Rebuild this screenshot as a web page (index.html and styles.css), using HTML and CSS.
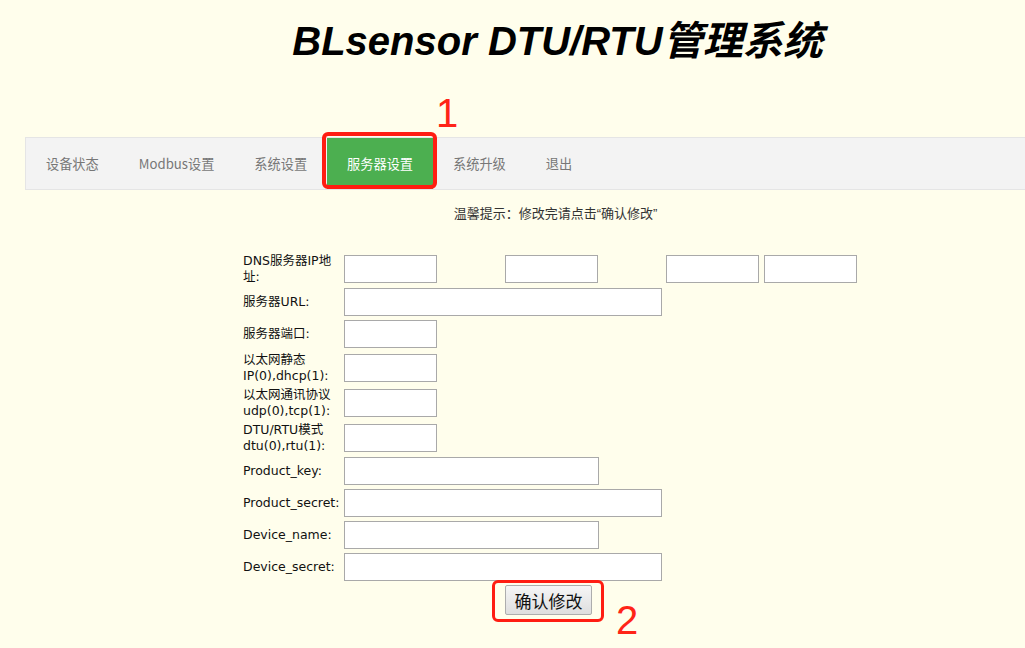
FILE: index.html
```html
<!DOCTYPE html>
<html lang="zh-CN">
<head>
  <meta charset="UTF-8" />
  <meta name="viewport" content="width=device-width, initial-scale=1.0">
  <title>BLsensor DTU/RTU管理系统</title>
  <link rel="stylesheet" href="styles.css">
</head>
<body>
  <h1 class="title">BLsensor DTU/RTU管理系统</h1>

  <ul class="menu">
    <li><a href="#">设备状态</a></li>
    <li><a href="#">Modbus设置</a></li>
    <li><a href="#">系统设置</a></li>
    <li class="active"><a href="#">服务器设置</a><span class="mark mark-1">1</span></li>
    <li><a href="#">系统升级</a></li>
    <li><a href="#">退出</a></li>
  </ul>

  <p class="tip">温馨提示：修改完请点击“确认修改”</p>

  <form class="settings" onsubmit="return false">
    <label>DNS服务器IP地址:</label>
    <div class="dns">
      <input type="text" class="short">
      <input type="text" class="short">
      <input type="text" class="short">
      <input type="text" class="short">
    </div>

    <label>服务器URL:</label>
    <input type="text" class="long">

    <label>服务器端口:</label>
    <input type="text" class="short">

    <label>以太网静态<br>IP(0),dhcp(1):</label>
    <input type="text" class="short">

    <label>以太网通讯协议<br>udp(0),tcp(1):</label>
    <input type="text" class="short">

    <label>DTU/RTU模式<br>dtu(0),rtu(1):</label>
    <input type="text" class="short">

    <label>Product_key:</label>
    <input type="text" class="mid">

    <label>Product_secret:</label>
    <input type="text" class="long">

    <label>Device_name:</label>
    <input type="text" class="mid">

    <label>Device_secret:</label>
    <input type="text" class="long">

    <div class="actions">
      <span class="annot">
        <button type="submit">确认修改</button>
        <span class="mark mark-2">2</span>
      </span>
    </div>
  </form>
</body>
</html>
```

FILE: styles.css
```css
body {
  margin: 0;
  padding-bottom: 34px;
  background: #fffeec;
  color: #111;
  font-family: "DejaVu Sans", "Noto Sans CJK SC", sans-serif;
}
.title {
  margin: 17px 0 0;
  padding-left: 90px;
  text-align: center;
  font-family: "Liberation Sans", "Noto Sans CJK SC", sans-serif;
  font-size: 40px;
  line-height: 48px;
  font-weight: bold;
  font-style: italic;
  color: #000;
}
.menu {
  list-style: none;
  display: flex;
  margin: 72px 0 0 25px;
  padding: 0;
  height: 51px;
  background: #f3f3f3;
  border: 1px solid #e5e5e5;
  border-right: none;
}
.menu li {
  position: relative;
  display: flex;
}
.menu a {
  display: flex;
  align-items: center;
  padding: 0 20px;
  color: #777;
  text-decoration: none;
  font-family: "Noto Sans CJK SC", sans-serif;
  font-size: 13.2px;
}
.menu .active a {
  background: #4caf50;
  color: #fff;
}
.menu .active::after {
  content: "";
  position: absolute;
  left: -5px;
  right: -4px;
  top: -6px;
  bottom: 0;
  border: 4px solid #ff1d12;
  border-radius: 6px;
  pointer-events: none;
}
.mark {
  position: absolute;
  font-family: "Liberation Sans", sans-serif;
  font-size: 40px;
  line-height: 40px;
  font-weight: normal;
  color: #ff2418;
}
.mark-1 {
  left: 109px;
  top: -45px;
}
.mark-2 {
  left: 111px;
  top: 15px;
}
.tip {
  margin: 15px 0 0;
  padding-left: 86px;
  text-align: center;
  font-family: "Liberation Sans", "Noto Sans CJK SC", sans-serif;
  font-size: 13px;
  line-height: 18px;
  color: #333;
}
.settings {
  display: grid;
  grid-template-columns: 101px auto;
  row-gap: 4px;
  align-items: center;
  justify-content: start;
  margin: 30px 0 0 243px;
  width: 614px;
}
.settings label {
  padding-right: 6px;
  font-size: 12.5px;
  line-height: 15.5px;
  color: #111;
}
.settings input {
  box-sizing: border-box;
  height: 28px;
  margin: 0;
  border: 1px solid #a9a9a9;
  background: #fff;
}
.short {
  width: 93px;
}
.mid {
  width: 255px;
}
.long {
  width: 318px;
}
.dns {
  display: flex;
  gap: 5px;
}
.dns input:nth-child(-n+2) {
  margin-right: 63px;
}
.actions {
  grid-column: 1 / 3;
  display: flex;
  justify-content: center;
  padding-right: 3px;
}
.annot {
  position: relative;
  display: flex;
}
.annot::after {
  content: "";
  position: absolute;
  left: -13px;
  right: -12px;
  top: -5px;
  bottom: -7px;
  border: 3px solid #ff1d12;
  border-radius: 6px;
  pointer-events: none;
}
.annot button {
  width: 87px;
  height: 30px;
  padding: 0;
  font-family: "Noto Sans CJK SC", sans-serif;
  font-size: 17px;
  color: #111;
  background: linear-gradient(#f6f6f6, #dedede);
  border: 1px solid #adadad;
  border-radius: 2px;
}
```
